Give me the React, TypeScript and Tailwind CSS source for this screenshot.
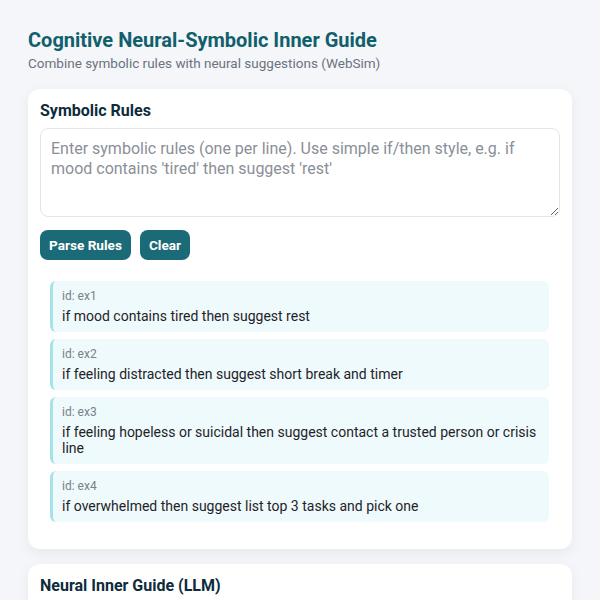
import React from "react";

const rules = [
  { id: "ex1", text: "if mood contains tired then suggest rest" },
  { id: "ex2", text: "if feeling distracted then suggest short break and timer" },
  { id: "ex3", text: "if feeling hopeless or suicidal then suggest contact a trusted person or crisis line" },
  { id: "ex4", text: "if overwhelmed then suggest list top 3 tasks and pick one" },
];

export default function App() {
  return (
    <div className="min-h-screen bg-[#f4f6f9] px-[28px] pt-[28px] pb-8 font-['Roboto',sans-serif] leading-[normal]">
      <h1 className="text-[20px] font-bold text-[#115f6c] leading-[normal]">Cognitive Neural-Symbolic Inner Guide</h1>
      <p className="mt-[3px] text-[13.5px] text-[#6b7280] leading-[normal]">Combine symbolic rules with neural suggestions (WebSim)</p>

      <section className="mt-[18px] rounded-[12px] bg-white p-[12px] pb-[12px] shadow-[0_4px_14px_rgba(15,30,50,0.06)]">
        <h2 className="text-[16px] font-bold text-[#0d2b3b] leading-[normal]">Symbolic Rules</h2>
        <textarea
          className="mt-[8px] block h-[89px] w-full resize-y rounded-[8px] border border-[#e3e6ea] bg-white px-[10px] py-[10px] text-[16px] leading-[20px] text-[#1f2937] placeholder:text-[#8a8f98] outline-none"
          placeholder="Enter symbolic rules (one per line). Use simple if/then style, e.g. if mood contains 'tired' then suggest 'rest'"
        />
        <div className="mt-[13px] flex gap-[9px]">
          <button className="h-[30px] rounded-[8px] bg-[#1b6a77] px-[9px] text-[13.6px] font-bold text-white">Parse Rules</button>
          <button className="h-[30px] rounded-[8px] bg-[#1b6a77] px-[9px] text-[13.6px] font-bold text-white">Clear</button>
        </div>
        <ul className="ml-[10px] mr-[11px] mt-[21px] mb-[15px] flex flex-col gap-[7px]">
          {rules.map((r) => (
            <li key={r.id} className="rounded-[6px] border-l-[3px] border-[#a6e2e9] bg-[#effafc] py-[8px] pl-[9px] pr-[10px]">
              <div className="text-[12px] text-[#7a8088] leading-[normal]">id: {r.id}</div>
              <div className="mt-[5px] text-[14px] text-[#1f2328] leading-[normal]">{r.text}</div>
            </li>
          ))}
        </ul>
      </section>

      <section className="mt-[15px] rounded-[12px] bg-white p-[12px] shadow-[0_4px_14px_rgba(15,30,50,0.06)]">
        <h2 className="text-[16px] font-bold text-[#0d2b3b] leading-[normal]">Neural Inner Guide (LLM)</h2>
        <div className="h-[120px]" />
      </section>
    </div>
  );
}
